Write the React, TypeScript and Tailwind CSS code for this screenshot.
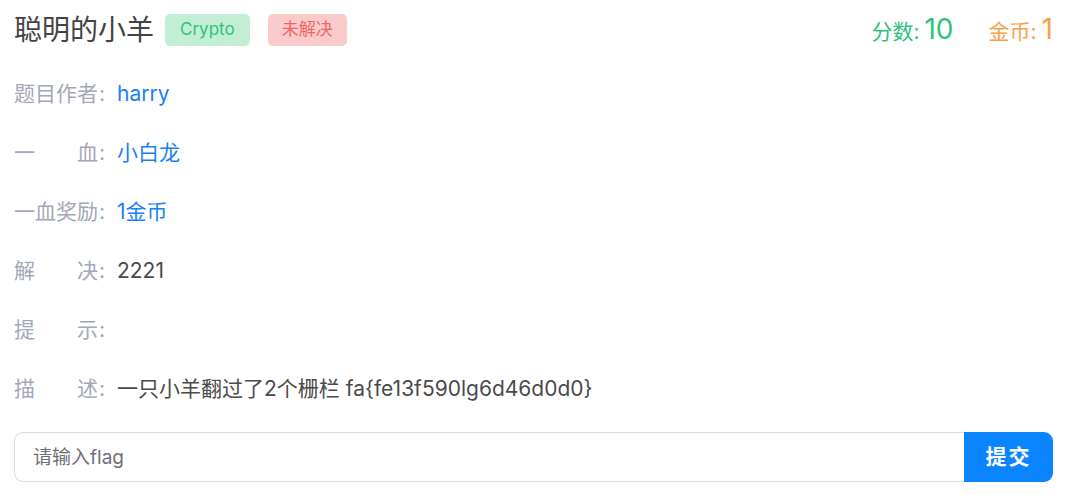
import React from 'react';

const font = { fontFamily: 'Inter, "Noto Sans CJK SC", sans-serif' };

interface RowProps {
    label: string;
    children?: React.ReactNode;
}

const InfoRow: React.FC<RowProps> = ({ label, children }) => (
    <div className="flex h-[59px] items-center text-[21px]">
        <span className="inline-block w-[84px] text-[#a3a7b9] [text-align-last:justify]">{label}</span>
        <span className="w-[19px] pl-[1px] text-[#a3a7b9]">:</span>
        <span className="flex-1">{children}</span>
    </div>
);

const App: React.FC = () => {
    return (
        <div className="w-[1071px] bg-white pl-[14px] pr-[18px] pb-[14px]" style={font}>
            <div className="flex h-[60px] items-center justify-between">
                <div className="flex items-center">
                    <h1 className="text-[28px] leading-none text-[#444]">聪明的小羊</h1>
                    <span className="ml-[11px] rounded-[5px] bg-[#c2eed6] px-[15px] py-[3px] text-[17px] text-[#33c27a]">
                        Crypto
                    </span>
                    <span className="ml-[18px] rounded-[5px] bg-[#fbcaca] px-[14px] py-[3px] text-[17px] text-[#ef6666]">
                        未解决
                    </span>
                </div>
                <div className="flex items-baseline pt-[3px]">
                    <span className="text-[21px] text-[#2fc27c]">分数:</span>
                    <span className="ml-[5px] text-[28px] leading-none text-[#2fc27c]">10</span>
                    <span className="ml-[35px] text-[21px] text-[#f7a048]">金币:</span>
                    <span className="ml-[5px] text-[28px] leading-none text-[#f7a048]">1</span>
                </div>
            </div>
            <div className="mt-[4px]">
                <InfoRow label="题目作者">
                    <span className="text-[#1c7ff5]">harry</span>
                </InfoRow>
                <InfoRow label="一血">
                    <span className="text-[#1c7ff5]">小白龙</span>
                </InfoRow>
                <InfoRow label="一血奖励">
                    <span className="text-[#1c7ff5]">1金币</span>
                </InfoRow>
                <InfoRow label="解决">
                    <span className="text-[#4a4a4a]">2221</span>
                </InfoRow>
                <InfoRow label="提示" />
                <InfoRow label="描述">
                    <span className="text-[#4a4a4a]">一只小羊翻过了2个栅栏 fa{'{'}fe13f590lg6d46d0d0{'}'}</span>
                </InfoRow>
            </div>
            <div className="mt-[14px] flex h-[50px]">
                <input
                    className="h-full flex-1 rounded-l-[9px] border border-r-0 border-[#dcdcdc] px-[18px] text-[19px] text-[#333] outline-none placeholder:text-[#6f6f75]"
                    placeholder="请输入flag"
                    style={font}
                />
                <button className="h-full w-[89px] rounded-r-[9px] bg-[#0a84ff] text-[21px] font-bold tracking-[2px] text-white">
                    提交
                </button>
            </div>
        </div>
    );
};

export default App;
